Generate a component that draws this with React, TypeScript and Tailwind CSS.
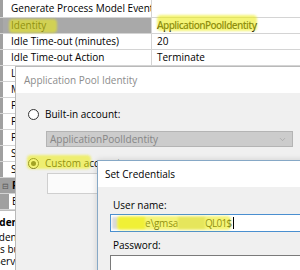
import React from 'react';
import { ChevronDown } from 'lucide-react';

type Prop = { name: string; value?: string; bold?: boolean; selected?: boolean };

const props: Prop[] = [
  { name: 'Generate Process Model Event Log Entry' },
  { name: 'Identity', value: 'ApplicationPoolIdentity', bold: true, selected: true },
  { name: 'Idle Time-out (minutes)', value: '20' },
  { name: 'Idle Time-out Action', value: 'Terminate' },
  { name: 'Load User Profile', value: 'False' },
  { name: 'Maximum Worker Processes', value: '1' },
  { name: 'Ping Enabled', value: 'True' },
  { name: 'Ping Maximum Response Time (seconds)', value: '90' },
  { name: 'Ping Period (seconds)', value: '30' },
  { name: 'Shutdown Time Limit (seconds)', value: '90' },
  { name: 'Startup Time Limit (seconds)', value: '90' },
];

function Row({ p, first }: { p: Prop; first?: boolean }) {
  return (
    <div className={`flex border-b border-[#d4d4d4] ${first ? 'h-[18px]' : 'h-[16px]'}`}>
      <div
        className={`flex w-[152px] shrink-0 items-center overflow-hidden border-r border-[#d4d4d4] ${
          p.selected ? 'bg-[#a9a9a9]' : 'bg-white'
        }`}
      >
        <div className="h-full w-[3px] shrink-0 bg-[#a0a0a0]" />
        <span className="ml-[8px] whitespace-nowrap">{p.name}</span>
      </div>
      <div
        className={`flex flex-1 items-center whitespace-nowrap pl-[5px] ${
          p.bold ? 'font-semibold tracking-[-0.6px]' : ''
        }`}
      >
        {p.value}
      </div>
    </div>
  );
}

function Radio({ checked }: { checked?: boolean }) {
  return (
    <span className="flex h-[11px] w-[11px] shrink-0 items-center justify-center rounded-full border border-[#333333] bg-white">
      {checked && <span className="h-[5px] w-[5px] rounded-full bg-[#333333]" />}
    </span>
  );
}

function Marker({ className }: { className: string }) {
  // highlighter stroke laid over the screenshot text
  return <div className={`absolute rounded-[4px] bg-[#eded1c]/60 blur-[1px] ${className}`} />;
}

export default function App() {
  return (
    <div className="relative h-[270px] w-[300px] overflow-hidden bg-white font-['Open_Sans',sans-serif] text-[10px] text-black">
      {/* Property grid */}
      <div>
        {props.map((p, i) => (
          <Row key={p.name} p={p} first={i === 0} />
        ))}
        <div className="flex h-[16px] items-center border-b border-[#d4d4d4] bg-[#a0a0a0]">
          <span className="ml-[2px] w-[10px] text-[8px] text-[#555]">⊟</span>
          <span className="font-bold">Process Orphaning</span>
        </div>
        <div className="flex h-[16px] border-b border-[#d4d4d4]">
          <div className="flex w-[152px] items-center border-r border-[#d4d4d4]">
            <div className="h-full w-[9px] bg-[#a0a0a0]" />
            <span className="ml-[3px]">Enabled</span>
          </div>
          <div className="flex items-center pl-[5px]">False</div>
        </div>
        {/* Description */}
        <div className="border-t border-[#bdbdbd] pt-[5px] leading-[12px] whitespace-nowrap">
          <div className="ml-[-4px] font-bold">Identity</div>
          <div className="ml-[-4px] mt-[3px]">Identity type under which the application pool runs,</div>
          <div className="ml-[-5.5px]">as built-in account or as a specific user,</div>
          <div className="ml-[-5px]">Service account or custom credentials.</div>
        </div>
      </div>

      <Marker className="left-[9px] top-[19px] h-[14px] w-[48px]" />
      <Marker className="left-[157px] top-[15px] h-[16px] w-[100px]" />

      {/* Application Pool Identity dialog */}
      <div className="absolute left-[15px] top-[66px] h-[230px] w-[300px] border-l border-t border-[#b9b9b9] bg-[#f0f0f0]">
        <div className="flex h-[26px] items-center bg-white pl-[8px] text-[#8c8c8c]">Application Pool Identity</div>
        <div className="pl-[12px]">
          <div className="mt-[14px] flex h-[14px] items-center gap-[6px]">
            <Radio />
            <span>Built-in account:</span>
          </div>
          <div className="ml-[18px] mt-[10px] flex h-[16px] w-[247px] items-center justify-between border border-[#b4b4b4] bg-[#cccccc] pl-[3px] pr-[5px] text-[#868686]">
            <span>ApplicationPoolIdentity</span>
            <ChevronDown size={9} strokeWidth={1.5} className="text-[#9a9a9a]" />
          </div>
          <div className="mt-[9px] flex h-[14px] items-center gap-[6px]">
            <Radio checked />
            <span>Custom account:</span>
          </div>
          <div className="ml-[19px] mt-[3px] h-[21px] w-[245px] border border-[#cfcfcf] bg-[#fbfbfb]" />
        </div>
      </div>

      <Marker className="left-[27px] top-[155px] h-[14px] w-[64px]" />

      {/* Set Credentials dialog */}
      <div className="absolute left-[97px] top-[160px] h-[130px] w-[230px] border border-[#86a8c6] bg-[#f0f0f0] shadow-[0_0_6px_rgba(0,0,0,0.15)]">
        <div className="flex h-[26px] items-center bg-white pl-[7px]">Set Credentials</div>
        <div className="pl-[12px]">
          <div className="ml-[3px] mt-[12px] leading-[12px]">User name:</div>
          <div className="mt-[3px] flex h-[18px] w-[200px] items-center border border-[#4a8fd0] bg-white pl-[1px]">
            <span className="h-[12px] w-[6px] bg-[#dadada] blur-[1px]" />
            <span className="h-[12px] w-[27px] bg-[#f4f45c] blur-[1px]" />
            <span className="whitespace-nowrap tracking-[-0.2px]">e\gmsa</span>
            <span className="h-[12px] w-[27px] bg-[#dcdcbc] blur-[1px]" />
            <span className="whitespace-nowrap tracking-[-0.8px]">QL01$</span>
            <span className="ml-[2px] h-[12px] w-[1px] bg-black" />
          </div>
          <div className="ml-[3px] mt-[7px] leading-[12px]">Password:</div>
          <div className="mt-[4px] h-[18px] w-[200px] border border-[#7a7a7a] bg-white" />
        </div>
      </div>

      <Marker className="left-[117px] top-[216px] h-[14px] w-[114px]" />
    </div>
  );
}
